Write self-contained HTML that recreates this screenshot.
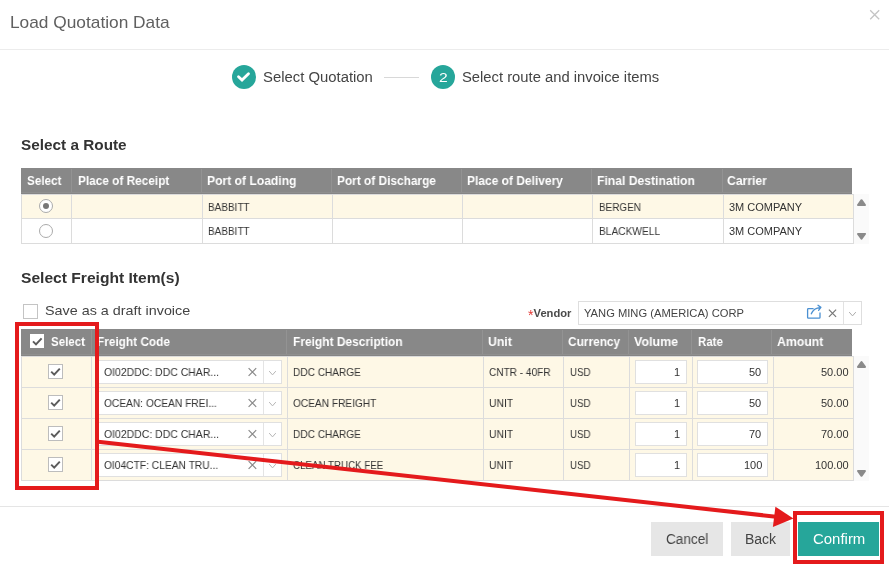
<!DOCTYPE html>
<html lang="en"><head><meta charset="utf-8"><title>Load Quotation Data</title>
<style>
html,body{margin:0;padding:0}
body{width:889px;height:566px;position:relative;overflow:hidden;background:#fff;font-family:"Liberation Sans", sans-serif}
.t{position:absolute;white-space:nowrap;line-height:1;z-index:5;will-change:transform}
.b{position:absolute;box-sizing:content-box}
.ov{pointer-events:none;z-index:6}
.radio{width:12px;height:12px;border:1px solid #ababab;border-radius:50%;background:#fff}
.radio i{position:absolute;left:3px;top:3px;width:6px;height:6px;border-radius:50%;background:#777}
</style></head><body>
<div class="b" style="left:0;top:49px;width:889px;height:1px;background:#ececec"></div>
<svg class="b" style="left:868px;top:8px" width="14" height="14" viewBox="0 0 14 14"><path d="M2.2 2.2 L11.2 11.2 M11.2 2.2 L2.2 11.2" stroke="#c4c4c4" stroke-width="1.3" fill="none"/></svg>
<svg class="b" style="left:230px;top:63px" width="28" height="28" viewBox="0 0 28 28"><circle cx="14" cy="14" r="12" fill="#26a69a"/><path d="M8.5 13.8 L12 17.1 L18.5 10.7" stroke="#fff" stroke-width="2.8" fill="none" stroke-linecap="round" stroke-linejoin="miter"/></svg>
<div class="b" style="left:384px;top:77px;width:35px;height:1px;background:#d8d8d8"></div>
<div class="b" style="left:431px;top:65px;width:24px;height:24px;border-radius:12px;background:#26a69a"></div>
<div class="b" style="left:21px;top:168px;width:831px;height:26px;background:#888888"></div>
<div class="b" style="left:71px;top:169px;width:1px;height:23px;background:#939393"></div>
<div class="b" style="left:201px;top:169px;width:1px;height:23px;background:#939393"></div>
<div class="b" style="left:331px;top:169px;width:1px;height:23px;background:#939393"></div>
<div class="b" style="left:461px;top:169px;width:1px;height:23px;background:#939393"></div>
<div class="b" style="left:591px;top:169px;width:1px;height:23px;background:#939393"></div>
<div class="b" style="left:722px;top:169px;width:1px;height:23px;background:#939393"></div>
<div class="b" style="left:21px;top:192px;width:831px;height:1px;background:#8f8f8f"></div><div class="b" style="left:21px;top:193px;width:831px;height:1px;background:#858585"></div>
<div class="b" style="left:21px;top:194px;width:833px;height:50px;background:#dcdcdc"></div>
<div class="b" style="left:22px;top:195px;width:831px;height:23px;background:#fef8e6"></div>
<div class="b" style="left:22px;top:219px;width:831px;height:24px;background:#fff"></div>
<div class="b" style="left:71px;top:194px;width:1px;height:49px;background:#dcdcdc"></div>
<div class="b" style="left:202px;top:194px;width:1px;height:49px;background:#dcdcdc"></div>
<div class="b" style="left:332px;top:194px;width:1px;height:49px;background:#dcdcdc"></div>
<div class="b" style="left:462px;top:194px;width:1px;height:49px;background:#dcdcdc"></div>
<div class="b" style="left:592px;top:194px;width:1px;height:49px;background:#dcdcdc"></div>
<div class="b" style="left:723px;top:194px;width:1px;height:49px;background:#dcdcdc"></div>
<div class="b" style="left:854px;top:194px;width:15px;height:50px;background:#fafafa"></div>
<div class="b radio" style="left:39px;top:198.6px"><i></i></div>
<div class="b radio" style="left:39px;top:223.6px"></div>
<div class="b" style="left:23px;top:304px;width:13px;height:13px;border:1px solid #c4c4c4;background:#fff"></div>
<div class="b" style="left:578px;top:301px;width:282px;height:22px;border:1px solid #dedede;background:#fff"></div>
<div class="b" style="left:843px;top:302px;width:1px;height:22px;background:#e2e2e2"></div>
<svg class="b" style="left:805px;top:303px" width="20" height="18" viewBox="0 0 20 18"><path d="M8.6 5.6 H3.4 Q2.6 5.6 2.6 6.4 V14.4 Q2.6 15.2 3.4 15.2 H14.2 Q15 15.2 15 14.4 V9.5" stroke="#4a90d2" stroke-width="1.3" fill="none"/><path d="M6.3 10.8 Q8.5 5 15.6 4.3 M13 2.3 L15.9 4.4 L13.6 7.3" stroke="#4a90d2" stroke-width="1.3" fill="none" stroke-linejoin="round" stroke-linecap="round"/></svg>
<div class="b" style="left:21px;top:329px;width:831px;height:27px;background:#888888"></div>
<div class="b" style="left:91px;top:330px;width:1px;height:24px;background:#939393"></div>
<div class="b" style="left:286px;top:330px;width:1px;height:24px;background:#939393"></div>
<div class="b" style="left:482px;top:330px;width:1px;height:24px;background:#939393"></div>
<div class="b" style="left:562px;top:330px;width:1px;height:24px;background:#939393"></div>
<div class="b" style="left:628px;top:330px;width:1px;height:24px;background:#939393"></div>
<div class="b" style="left:691px;top:330px;width:1px;height:24px;background:#939393"></div>
<div class="b" style="left:771px;top:330px;width:1px;height:24px;background:#939393"></div>
<div class="b" style="left:21px;top:354px;width:831px;height:1px;background:#8f8f8f"></div><div class="b" style="left:21px;top:355px;width:831px;height:1px;background:#858585"></div>
<div class="b" style="left:21px;top:356px;width:833px;height:125px;background:#dcdcdc"></div>
<div class="b" style="left:22px;top:357px;width:831px;height:30px;background:#fef8e6"></div>
<div class="b" style="left:22px;top:388px;width:831px;height:30px;background:#fef8e6"></div>
<div class="b" style="left:22px;top:419px;width:831px;height:30px;background:#fef8e6"></div>
<div class="b" style="left:22px;top:450px;width:831px;height:30px;background:#fef8e6"></div>
<div class="b" style="left:91px;top:356px;width:1px;height:124px;background:#dcdcdc"></div>
<div class="b" style="left:287px;top:356px;width:1px;height:124px;background:#dcdcdc"></div>
<div class="b" style="left:483px;top:356px;width:1px;height:124px;background:#dcdcdc"></div>
<div class="b" style="left:563px;top:356px;width:1px;height:124px;background:#dcdcdc"></div>
<div class="b" style="left:629px;top:356px;width:1px;height:124px;background:#dcdcdc"></div>
<div class="b" style="left:692px;top:356px;width:1px;height:124px;background:#dcdcdc"></div>
<div class="b" style="left:773px;top:356px;width:1px;height:124px;background:#dcdcdc"></div>
<div class="b" style="left:854px;top:356px;width:15px;height:125px;background:#fafafa"></div>
<div class="b" style="left:30px;top:334px;width:14px;height:14px;background:#fff"></div>
<div class="b" style="left:48px;top:364px;width:13px;height:13px;border:1px solid #bdbdbd;background:#fff"></div>
<div class="b" style="left:98px;top:360px;width:182px;height:22px;border:1px solid #e0e0e0;background:#fff"></div>
<div class="b" style="left:263px;top:361px;width:1px;height:22px;background:#e4e4e4"></div>
<div class="b" style="left:635px;top:360px;width:50px;height:22px;border:1px solid #e0e0e0;background:#fff"></div>
<div class="b" style="left:697px;top:360px;width:69px;height:22px;border:1px solid #e0e0e0;background:#fff"></div>
<div class="b" style="left:48px;top:395px;width:13px;height:13px;border:1px solid #bdbdbd;background:#fff"></div>
<div class="b" style="left:98px;top:391px;width:182px;height:22px;border:1px solid #e0e0e0;background:#fff"></div>
<div class="b" style="left:263px;top:392px;width:1px;height:22px;background:#e4e4e4"></div>
<div class="b" style="left:635px;top:391px;width:50px;height:22px;border:1px solid #e0e0e0;background:#fff"></div>
<div class="b" style="left:697px;top:391px;width:69px;height:22px;border:1px solid #e0e0e0;background:#fff"></div>
<div class="b" style="left:48px;top:426px;width:13px;height:13px;border:1px solid #bdbdbd;background:#fff"></div>
<div class="b" style="left:98px;top:422px;width:182px;height:22px;border:1px solid #e0e0e0;background:#fff"></div>
<div class="b" style="left:263px;top:423px;width:1px;height:22px;background:#e4e4e4"></div>
<div class="b" style="left:635px;top:422px;width:50px;height:22px;border:1px solid #e0e0e0;background:#fff"></div>
<div class="b" style="left:697px;top:422px;width:69px;height:22px;border:1px solid #e0e0e0;background:#fff"></div>
<div class="b" style="left:48px;top:457px;width:13px;height:13px;border:1px solid #bdbdbd;background:#fff"></div>
<div class="b" style="left:98px;top:453px;width:182px;height:22px;border:1px solid #e0e0e0;background:#fff"></div>
<div class="b" style="left:263px;top:454px;width:1px;height:22px;background:#e4e4e4"></div>
<div class="b" style="left:635px;top:453px;width:50px;height:22px;border:1px solid #e0e0e0;background:#fff"></div>
<div class="b" style="left:697px;top:453px;width:69px;height:22px;border:1px solid #e0e0e0;background:#fff"></div>
<div class="b" style="left:0;top:506px;width:889px;height:1px;background:#e5e5e5"></div>
<div class="b" style="left:651px;top:522px;width:72px;height:34px;background:#e6e6e6"></div>
<div class="b" style="left:731px;top:522px;width:59px;height:34px;background:#e6e6e6"></div>
<div class="b" style="left:798px;top:522px;width:81px;height:34px;background:#26a69a"></div>
<svg class="b ov" style="left:0;top:0" width="889" height="566" viewBox="0 0 889 566">
<polygon points="861.5,200.2 865.0,205.0 858.0,205.0" fill="#8a8a8a" stroke="#8a8a8a" stroke-width="2" stroke-linejoin="round"/>
<polygon points="861.5,238.70000000000002 865.0,233.9 858.0,233.9" fill="#8a8a8a" stroke="#8a8a8a" stroke-width="2" stroke-linejoin="round"/>
<path d="M828.9 309.6 L836.1 316.8 M836.1 309.6 L828.9 316.8" stroke="#777" stroke-width="1.2" fill="none"/>
<path d="M849.2 312.1 L852.5 315.9 L855.8 312.1" stroke="#aaa" stroke-width="1" fill="none"/>
<polygon points="861.5,362.1 865.0,366.9 858.0,366.9" fill="#8a8a8a" stroke="#8a8a8a" stroke-width="2" stroke-linejoin="round"/>
<polygon points="861.5,475.79999999999995 865.0,471.0 858.0,471.0" fill="#8a8a8a" stroke="#8a8a8a" stroke-width="2" stroke-linejoin="round"/>
<path d="M33.0 341.4 L36.0 344.4 L41.6 338.4" stroke="#5c5c5c" stroke-width="2" fill="none"/>
<path d="M51.2 371.6 L54.2 374.6 L59.8 368.6" stroke="#5c5c5c" stroke-width="2" fill="none"/>
<path d="M248.6 368.2 L256.2 375.8 M256.2 368.2 L248.6 375.8" stroke="#8a8a8a" stroke-width="1.2" fill="none"/>
<path d="M269.2 371.1 L272.5 374.9 L275.8 371.1" stroke="#b5b5b5" stroke-width="1" fill="none"/>
<path d="M51.2 402.6 L54.2 405.6 L59.8 399.6" stroke="#5c5c5c" stroke-width="2" fill="none"/>
<path d="M248.6 399.2 L256.2 406.8 M256.2 399.2 L248.6 406.8" stroke="#8a8a8a" stroke-width="1.2" fill="none"/>
<path d="M269.2 402.1 L272.5 405.9 L275.8 402.1" stroke="#b5b5b5" stroke-width="1" fill="none"/>
<path d="M51.2 433.6 L54.2 436.6 L59.8 430.6" stroke="#5c5c5c" stroke-width="2" fill="none"/>
<path d="M248.6 430.2 L256.2 437.8 M256.2 430.2 L248.6 437.8" stroke="#8a8a8a" stroke-width="1.2" fill="none"/>
<path d="M269.2 433.1 L272.5 436.9 L275.8 433.1" stroke="#b5b5b5" stroke-width="1" fill="none"/>
<path d="M51.2 464.6 L54.2 467.6 L59.8 461.6" stroke="#5c5c5c" stroke-width="2" fill="none"/>
<path d="M248.6 461.2 L256.2 468.8 M256.2 461.2 L248.6 468.8" stroke="#8a8a8a" stroke-width="1.2" fill="none"/>
<path d="M269.2 464.1 L272.5 467.9 L275.8 464.1" stroke="#b5b5b5" stroke-width="1" fill="none"/>
</svg>
<div class="t" id="t0" style="left:10.10px;top:14.01px;font-size:17px;font-weight:400;color:#606060;transform:scaleX(1.0173);transform-origin:left center;">Load Quotation Data</div>
<div class="t" id="t1" style="left:263.10px;top:70.15px;font-size:14px;font-weight:400;color:#444;transform:scaleX(1.0616);transform-origin:left center;">Select Quotation</div>
<div class="t" id="t2" style="left:462.10px;top:70.15px;font-size:14px;font-weight:400;color:#444;transform:scaleX(1.0558);transform-origin:left center;">Select route and invoice items</div>
<div class="t" id="t3" style="left:21.25px;top:137.30px;font-size:15px;font-weight:700;color:#333;transform:scaleX(1.0218);transform-origin:left center;">Select a Route</div>
<div class="t" id="t4" style="left:21.25px;top:270.30px;font-size:15px;font-weight:700;color:#333;transform:scaleX(1.0399);transform-origin:left center;">Select Freight Item(s)</div>
<div class="t" id="t5" style="left:27.00px;top:174.00px;font-size:13px;font-weight:700;color:#fff;transform:scaleX(0.8991);transform-origin:left center;">Select</div>
<div class="t" id="t6" style="left:77.50px;top:174.00px;font-size:13px;font-weight:700;color:#fff;transform:scaleX(0.9096);transform-origin:left center;">Place of Receipt</div>
<div class="t" id="t7" style="left:207.48px;top:174.00px;font-size:13px;font-weight:700;color:#fff;transform:scaleX(0.9317);transform-origin:left center;">Port of Loading</div>
<div class="t" id="t8" style="left:337.04px;top:174.00px;font-size:13px;font-weight:700;color:#fff;transform:scaleX(0.9131);transform-origin:left center;">Port of Discharge</div>
<div class="t" id="t9" style="left:467.00px;top:174.00px;font-size:13px;font-weight:700;color:#fff;transform:scaleX(0.9219);transform-origin:left center;">Place of Delivery</div>
<div class="t" id="t10" style="left:597.00px;top:174.00px;font-size:13px;font-weight:700;color:#fff;transform:scaleX(0.9350);transform-origin:left center;">Final Destination</div>
<div class="t" id="t11" style="left:727.00px;top:174.00px;font-size:13px;font-weight:700;color:#fff;transform:scaleX(0.9370);transform-origin:left center;">Carrier</div>
<div class="t" id="t12" style="left:208.02px;top:201.89px;font-size:11px;font-weight:400;color:#333;transform:scaleX(0.9083);transform-origin:left center;">BABBITT</div>
<div class="t" id="t13" style="left:598.50px;top:201.89px;font-size:11px;font-weight:400;color:#333;transform:scaleX(0.9021);transform-origin:left center;">BERGEN</div>
<div class="t" id="t14" style="left:728.75px;top:201.89px;font-size:11px;font-weight:400;color:#333;transform:scaleX(0.9939);transform-origin:left center;">3M COMPANY</div>
<div class="t" id="t15" style="left:208.02px;top:225.89px;font-size:11px;font-weight:400;color:#333;transform:scaleX(0.9083);transform-origin:left center;">BABBITT</div>
<div class="t" id="t16" style="left:598.50px;top:225.89px;font-size:11px;font-weight:400;color:#333;transform:scaleX(0.9247);transform-origin:left center;">BLACKWELL</div>
<div class="t" id="t17" style="left:728.75px;top:225.89px;font-size:11px;font-weight:400;color:#333;transform:scaleX(0.9939);transform-origin:left center;">3M COMPANY</div>
<div class="t" id="t18" style="left:44.60px;top:304.07px;font-size:13.5px;font-weight:400;color:#444;transform:scaleX(1.0632);transform-origin:left center;">Save as a draft invoice</div>
<div class="t" id="t19" style="left:528.46px;top:307.69px;font-size:11px;font-weight:700;color:#4a4a4a;transform:scaleX(1.0169);transform-origin:left center;"><span style="color:#e53935;font-weight:400;font-size:14px;position:relative;top:3px;line-height:0">*</span>Vendor</div>
<div class="t" id="t20" style="left:584.04px;top:307.69px;font-size:11px;font-weight:400;color:#444;transform:scaleX(1.0160);transform-origin:left center;">YANG MING (AMERICA) CORP</div>
<div class="t" id="t21" style="left:50.98px;top:334.70px;font-size:13px;font-weight:700;color:#fff;transform:scaleX(0.8863);transform-origin:left center;">Select</div>
<div class="t" id="t22" style="left:97.00px;top:334.70px;font-size:13px;font-weight:700;color:#fff;transform:scaleX(0.9097);transform-origin:left center;">Freight Code</div>
<div class="t" id="t23" style="left:292.96px;top:334.70px;font-size:13px;font-weight:700;color:#fff;transform:scaleX(0.9196);transform-origin:left center;">Freight Description</div>
<div class="t" id="t24" style="left:487.96px;top:334.70px;font-size:13px;font-weight:700;color:#fff;transform:scaleX(0.9424);transform-origin:left center;">Unit</div>
<div class="t" id="t25" style="left:567.98px;top:334.70px;font-size:13px;font-weight:700;color:#fff;transform:scaleX(0.9145);transform-origin:left center;">Currency</div>
<div class="t" id="t26" style="left:633.50px;top:334.70px;font-size:13px;font-weight:700;color:#fff;transform:scaleX(0.9590);transform-origin:left center;">Volume</div>
<div class="t" id="t27" style="left:697.52px;top:334.70px;font-size:13px;font-weight:700;color:#fff;transform:scaleX(0.8812);transform-origin:left center;">Rate</div>
<div class="t" id="t28" style="left:777.02px;top:334.70px;font-size:13px;font-weight:700;color:#fff;transform:scaleX(0.9430);transform-origin:left center;">Amount</div>
<div class="t" id="t29" style="left:103.54px;top:366.69px;font-size:11px;font-weight:400;color:#333;transform:scaleX(0.9505);transform-origin:left center;">OI02DDC: DDC CHAR...</div>
<div class="t" id="t30" style="left:293.48px;top:366.69px;font-size:11px;font-weight:400;color:#333;transform:scaleX(0.9183);transform-origin:left center;">DDC CHARGE</div>
<div class="t" id="t31" style="left:489.04px;top:366.69px;font-size:11px;font-weight:400;color:#333;transform:scaleX(0.9164);transform-origin:left center;">CNTR - 40FR</div>
<div class="t" id="t32" style="left:569.96px;top:366.69px;font-size:11px;font-weight:400;color:#333;transform:scaleX(0.8863);transform-origin:left center;">USD</div>
<div class="t" id="t33" style="right:209.00px;top:366.69px;font-size:11px;font-weight:400;color:#333;">1</div>
<div class="t" id="t34" style="right:127.48px;top:366.69px;font-size:11px;font-weight:400;color:#333;">50</div>
<div class="t" id="t35" style="right:40.10px;top:366.69px;font-size:11px;font-weight:400;color:#333;">50.00</div>
<div class="t" id="t36" style="left:103.54px;top:397.69px;font-size:11px;font-weight:400;color:#333;transform:scaleX(0.9276);transform-origin:left center;">OCEAN: OCEAN FREI...</div>
<div class="t" id="t37" style="left:293.48px;top:397.69px;font-size:11px;font-weight:400;color:#333;transform:scaleX(0.9208);transform-origin:left center;">OCEAN FREIGHT</div>
<div class="t" id="t38" style="left:489.04px;top:397.69px;font-size:11px;font-weight:400;color:#333;transform:scaleX(0.9396);transform-origin:left center;">UNIT</div>
<div class="t" id="t39" style="left:569.96px;top:397.69px;font-size:11px;font-weight:400;color:#333;transform:scaleX(0.8863);transform-origin:left center;">USD</div>
<div class="t" id="t40" style="right:209.00px;top:397.69px;font-size:11px;font-weight:400;color:#333;">1</div>
<div class="t" id="t41" style="right:127.48px;top:397.69px;font-size:11px;font-weight:400;color:#333;">50</div>
<div class="t" id="t42" style="right:40.10px;top:397.69px;font-size:11px;font-weight:400;color:#333;">50.00</div>
<div class="t" id="t43" style="left:103.54px;top:428.69px;font-size:11px;font-weight:400;color:#333;transform:scaleX(0.9505);transform-origin:left center;">OI02DDC: DDC CHAR...</div>
<div class="t" id="t44" style="left:293.48px;top:428.69px;font-size:11px;font-weight:400;color:#333;transform:scaleX(0.9183);transform-origin:left center;">DDC CHARGE</div>
<div class="t" id="t45" style="left:489.04px;top:428.69px;font-size:11px;font-weight:400;color:#333;transform:scaleX(0.9396);transform-origin:left center;">UNIT</div>
<div class="t" id="t46" style="left:569.96px;top:428.69px;font-size:11px;font-weight:400;color:#333;transform:scaleX(0.8863);transform-origin:left center;">USD</div>
<div class="t" id="t47" style="right:209.00px;top:428.69px;font-size:11px;font-weight:400;color:#333;">1</div>
<div class="t" id="t48" style="right:127.48px;top:428.69px;font-size:11px;font-weight:400;color:#333;">70</div>
<div class="t" id="t49" style="right:40.10px;top:428.69px;font-size:11px;font-weight:400;color:#333;">70.00</div>
<div class="t" id="t50" style="left:103.54px;top:459.69px;font-size:11px;font-weight:400;color:#333;transform:scaleX(0.9312);transform-origin:left center;">OI04CTF: CLEAN TRU...</div>
<div class="t" id="t51" style="left:293.48px;top:459.69px;font-size:11px;font-weight:400;color:#333;transform:scaleX(0.8856);transform-origin:left center;">CLEAN TRUCK FEE</div>
<div class="t" id="t52" style="left:489.04px;top:459.69px;font-size:11px;font-weight:400;color:#333;transform:scaleX(0.9396);transform-origin:left center;">UNIT</div>
<div class="t" id="t53" style="left:569.96px;top:459.69px;font-size:11px;font-weight:400;color:#333;transform:scaleX(0.8863);transform-origin:left center;">USD</div>
<div class="t" id="t54" style="right:209.00px;top:459.69px;font-size:11px;font-weight:400;color:#333;">1</div>
<div class="t" id="t55" style="right:126.58px;top:459.69px;font-size:11px;font-weight:400;color:#333;">100</div>
<div class="t" id="t56" style="right:40.10px;top:459.69px;font-size:11px;font-weight:400;color:#333;">100.00</div>
<div class="t" id="t57" style="left:665.50px;top:531.85px;font-size:14px;font-weight:400;color:#444;transform:scaleX(0.9689);transform-origin:left center;">Cancel</div>
<div class="t" id="t58" style="left:744.60px;top:531.85px;font-size:14px;font-weight:400;color:#444;">Back</div>
<div class="t" id="t59" style="left:812.52px;top:531.85px;font-size:14px;font-weight:400;color:#fff;transform:scaleX(1.0674);transform-origin:left center;">Confirm</div>
<div class="t" id="t60" style="left:438.58px;top:70.57px;font-size:13.5px;font-weight:400;color:#fff;transform:scaleX(1.1619);transform-origin:left center;">2</div>
<svg class="b ov" style="left:0;top:0" width="889" height="566">
<rect x="17" y="324" width="80" height="164" fill="none" stroke="#e41a1c" stroke-width="4"/>
<rect x="795" y="513" width="87" height="49" fill="none" stroke="#e41a1c" stroke-width="4"/>
<line x1="98" y1="441.8" x2="776" y2="516.7" stroke="#e41a1c" stroke-width="4"/>
<polygon points="793.4,518.4 775.4,506.7 772.9,526.9" fill="#e41a1c"/>
</svg>
</body></html>
